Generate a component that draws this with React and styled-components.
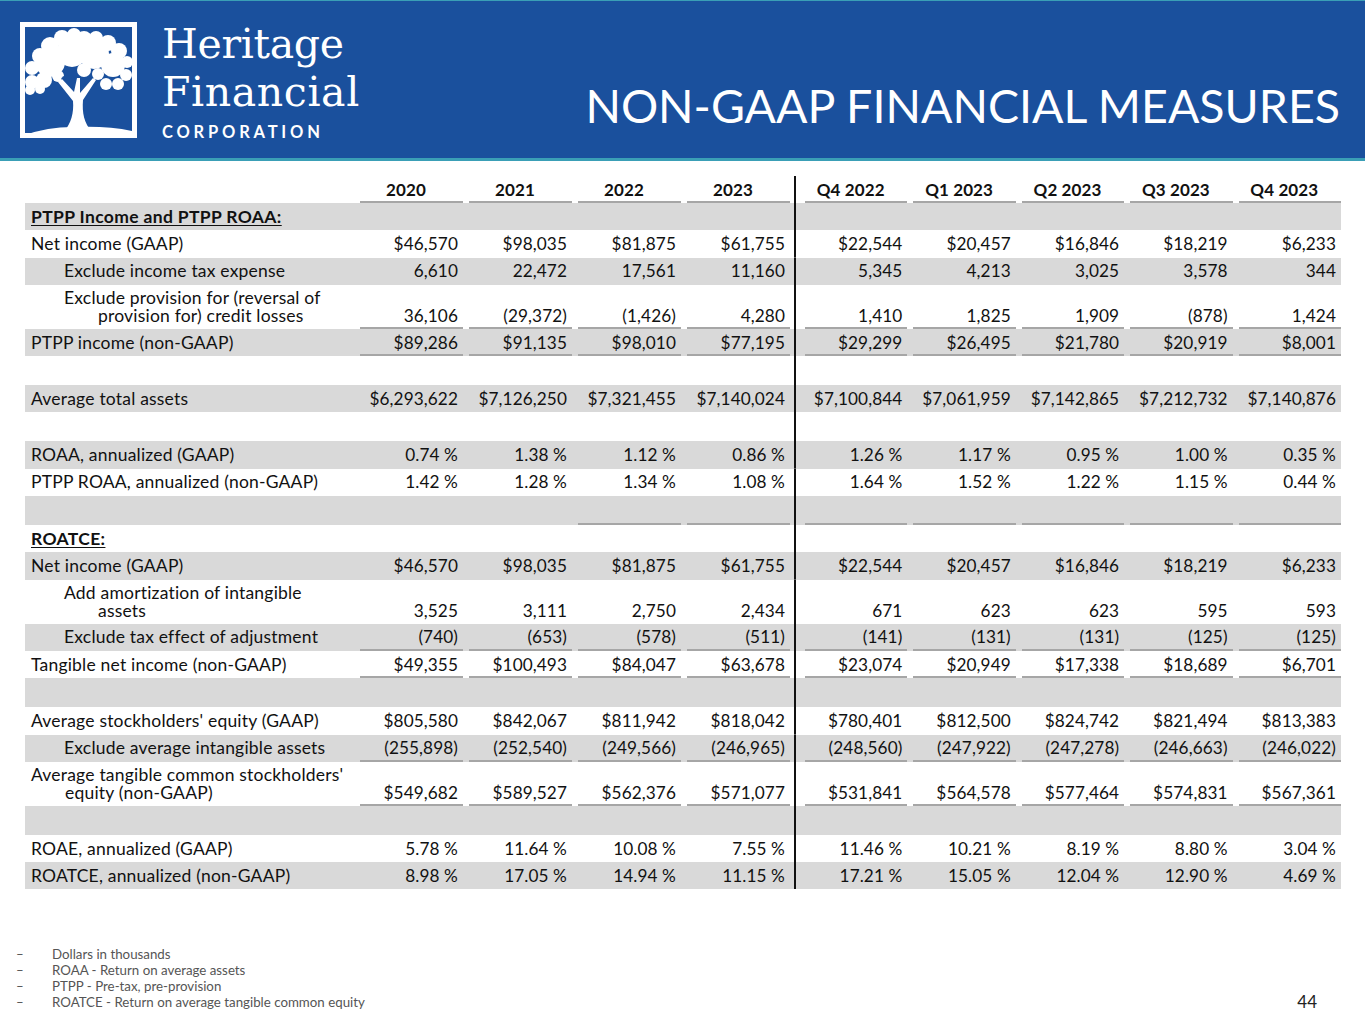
import React from "react";
import styled, { createGlobalStyle } from "styled-components";

const GlobalStyle = createGlobalStyle`
  html, body {
    margin: 0;
    padding: 0;
    background: #fff;
  }
  body {
    font-family: Lato, "Liberation Sans", sans-serif;
    color: #111;
  }
`;

const BLUE = "#1a509d";

const Page = styled.div`
  width: 1365px;
  height: 1024px;
  overflow: hidden;
  display: flex;
  flex-direction: column;
  background: #fff;
`;

const Header = styled.header`
  height: 157px;
  background: ${BLUE};
  border-top: 1px solid #3a9fb6;
  border-bottom: 3px solid #3a9fb6;
  display: flex;
  justify-content: space-between;
  align-items: flex-start;
`;

const Logo = styled.div`
  display: flex;
  padding: 21px 0 0 20px;
`;

const LogoText = styled.div`
  margin-left: 25px;
  margin-top: -2px;
  color: #fff;
`;

const Wordmark = styled.div`
  font-family: "DejaVu Serif", "Liberation Serif", serif;
  font-size: 41px;
  line-height: 48px;
  letter-spacing: ${(p) => p.$spacing}px;
`;

const Corp = styled.div`
  margin-top: 8px;
  font-family: Lato, sans-serif;
  font-weight: 700;
  font-size: 16.5px;
  line-height: 16px;
  letter-spacing: 3.8px;
`;

const Title = styled.h1`
  align-self: flex-end;
  margin: 0 25px 29px 0;
  font-family: Lato, sans-serif;
  font-weight: 400;
  font-size: 46.5px;
  line-height: 47px;
  color: #fff;
  white-space: nowrap;
`;

const Table = styled.div`
  margin: 15px 0 0 25px;
  width: 1316px;
`;

const Row = styled.div`
  display: grid;
  grid-template-columns: 329px repeat(4, 109px) 9px repeat(5, 1fr);
  height: ${(p) => p.$h}px;
  background: ${(p) => (p.$shade ? "#d9d9d9" : "transparent")};
  font-size: 17.5px;
  line-height: 18px;
`;

const Label = styled.div`
  display: flex;
  align-items: center;
  padding-left: ${(p) => p.$indent + 34}px;
  text-indent: -34px;
  white-space: nowrap;
  letter-spacing: ${(p) => (p.$heading ? 0.35 : 0.2)}px;
  font-weight: ${(p) => (p.$heading ? 700 : 400)};
  text-decoration: ${(p) => (p.$heading ? "underline" : "none")};
  text-underline-offset: 2px;
`;

const Cell = styled.div`
  display: flex;
  justify-content: ${(p) => (p.$head ? "center" : "flex-end")};
  align-items: ${(p) => (p.$tall ? "flex-end" : "center")};
  padding: 0 5px ${(p) => (p.$tall ? 4 : 0)}px 0;
  font-weight: ${(p) => (p.$head ? 700 : 400)};
  font-size: ${(p) => (p.$head ? 17 : 17.2)}px;
  letter-spacing: 0.1px;
  white-space: nowrap;
  background: ${(p) =>
    p.$under ? "linear-gradient(#a6a6a6, #a6a6a6) right bottom / calc(100% - 6px) 2px no-repeat" : "none"};
`;

const Divider = styled.div`
  background: linear-gradient(#111, #111) center / 2px 100% no-repeat;
`;

const Footer = styled.footer`
  margin-top: 57px;
  display: flex;
  justify-content: space-between;
  align-items: flex-end;
  padding: 0 48px 0 16px;
`;

const Notes = styled.ul`
  list-style: none;
  margin: 0;
  padding: 0;
  font-size: 13.3px;
  line-height: 16px;
  color: #555;
`;

const Note = styled.li`
  display: flex;
`;

const Dash = styled.span`
  width: 36px;
`;

const PageNum = styled.div`
  font-size: 17px;
  line-height: 16px;
  color: #222;
`;

const years = ["2020", "2021", "2022", "2023"];
const quarters = ["Q4 2022", "Q1 2023", "Q2 2023", "Q3 2023", "Q4 2023"];

const netIncome = ["$46,570", "$98,035", "$81,875", "$61,755", "$22,544", "$20,457", "$16,846", "$18,219", "$6,233"];

const rows = [
  { label: "PTPP Income and PTPP ROAA:", heading: true },
  { label: "Net income (GAAP)", values: netIncome },
  { label: "Exclude income tax expense", indent: 1, values: ["6,610", "22,472", "17,561", "11,160", "5,345", "4,213", "3,025", "3,578", "344"] },
  {
    label: ["Exclude provision for (reversal of", "provision for) credit losses"],
    indent: 1,
    values: ["36,106", "(29,372)", "(1,426)", "4,280", "1,410", "1,825", "1,909", "(878)", "1,424"],
    under: "all",
  },
  { label: "PTPP income (non-GAAP)", values: ["$89,286", "$91,135", "$98,010", "$77,195", "$29,299", "$26,495", "$21,780", "$20,919", "$8,001"], under: "all" },
  { empty: true },
  { label: "Average total assets", values: ["$6,293,622", "$7,126,250", "$7,321,455", "$7,140,024", "$7,100,844", "$7,061,959", "$7,142,865", "$7,212,732", "$7,140,876"] },
  { empty: true },
  { label: "ROAA, annualized (GAAP)", values: ["0.74 %", "1.38 %", "1.12 %", "0.86 %", "1.26 %", "1.17 %", "0.95 %", "1.00 %", "0.35 %"] },
  { label: "PTPP ROAA, annualized (non-GAAP)", values: ["1.42 %", "1.28 %", "1.34 %", "1.08 %", "1.64 %", "1.52 %", "1.22 %", "1.15 %", "0.44 %"] },
  { empty: true, under: [2, 3, 4, 5, 6, 7, 8] },
  { label: "ROATCE:", heading: true },
  { label: "Net income (GAAP)", values: netIncome },
  {
    label: ["Add amortization of intangible", "assets"],
    indent: 1,
    values: ["3,525", "3,111", "2,750", "2,434", "671", "623", "623", "595", "593"],
  },
  { label: "Exclude tax effect of adjustment", indent: 1, values: ["(740)", "(653)", "(578)", "(511)", "(141)", "(131)", "(131)", "(125)", "(125)"], under: "all" },
  { label: "Tangible net income (non-GAAP)", values: ["$49,355", "$100,493", "$84,047", "$63,678", "$23,074", "$20,949", "$17,338", "$18,689", "$6,701"], under: "all" },
  { empty: true },
  { label: "Average stockholders' equity (GAAP)", values: ["$805,580", "$842,067", "$811,942", "$818,042", "$780,401", "$812,500", "$824,742", "$821,494", "$813,383"] },
  {
    label: "Exclude average intangible assets",
    indent: 1,
    values: ["(255,898)", "(252,540)", "(249,566)", "(246,965)", "(248,560)", "(247,922)", "(247,278)", "(246,663)", "(246,022)"],
    under: "all",
  },
  {
    label: ["Average tangible common stockholders'", "equity (non-GAAP)"],
    values: ["$549,682", "$589,527", "$562,376", "$571,077", "$531,841", "$564,578", "$577,464", "$574,831", "$567,361"],
    under: "all",
  },
  { empty: true },
  { label: "ROAE, annualized (GAAP)", values: ["5.78 %", "11.64 %", "10.08 %", "7.55 %", "11.46 %", "10.21 %", "8.19 %", "8.80 %", "3.04 %"] },
  { label: "ROATCE, annualized (non-GAAP)", values: ["8.98 %", "17.05 %", "14.94 %", "11.15 %", "17.21 %", "15.05 %", "12.04 %", "12.90 %", "4.69 %"] },
];

const notes = [
  "Dollars in thousands",
  "ROAA - Return on average assets",
  "PTPP - Pre-tax, pre-provision",
  "ROATCE - Return on average tangible common equity",
];

function TreeMark() {
  return (
    <svg width="117" height="116" viewBox="0 0 117 116">
      <rect x="2.5" y="2.5" width="112" height="111" fill="none" stroke="#fff" strokeWidth="5" />
      <g fill="#fff">
        <circle cx="12" cy="46" r="7" />
        <circle cx="20" cy="34" r="8" />
        <circle cx="30" cy="24" r="9" />
        <circle cx="42" cy="16" r="8" />
        <circle cx="54" cy="13" r="7" />
        <circle cx="64" cy="17" r="8" />
        <circle cx="76" cy="16" r="7" />
        <circle cx="88" cy="21" r="8" />
        <circle cx="99" cy="29" r="8" />
        <circle cx="107" cy="40" r="6" />
        <circle cx="106" cy="53" r="6" />
        <circle cx="98" cy="62" r="6" />
        <circle cx="86" cy="62" r="6" />
        <circle cx="30" cy="40" r="15" />
        <circle cx="52" cy="30" r="15" />
        <circle cx="74" cy="32" r="15" />
        <circle cx="93" cy="43" r="12" />
        <circle cx="12" cy="60" r="7" />
        <circle cx="24" cy="58" r="8" />
        <circle cx="10" cy="68" r="5" />
        <circle cx="20" cy="67" r="5" />
        <circle cx="38" cy="54" r="6" />
        <circle cx="64" cy="48" r="7" />
        <circle cx="78" cy="52" r="6" />
      </g>
      <g fill={BLUE}>
        <ellipse cx="48" cy="58" rx="7" ry="5" />
        <ellipse cx="70" cy="60" rx="6" ry="4" />
      </g>
      <path
        fill="#fff"
        d="M44 110 C51 101 54 91 53 79 L38 60 L42 57 L54 70 L57 56 L60 56 L60 71 L73 56 L76 58 L63 78 C62 91 64 101 72 110 Z"
      />
      <path fill="#fff" d="M5 113 Q30 104 58 105 Q88 104 112 109 L112 113 Z" />
    </svg>
  );
}

function TableRow({ row, index }) {
  const shade = index % 2 === 0;
  const tall = Array.isArray(row.label);
  const h = row.empty ? 29 : tall ? 44 : 27.3;
  const underAt = (i) => row.under === "all" || (Array.isArray(row.under) && row.under.includes(i));
  const cells = [];
  for (let i = 0; i < 9; i++) {
    if (i === 4) cells.push(<Divider key="div" />);
    cells.push(
      <Cell key={i} $tall={tall} $under={underAt(i)}>
        {row.values ? row.values[i] : ""}
      </Cell>
    );
  }
  return (
    <Row $h={h} $shade={shade}>
      <Label $indent={row.indent ? 39 : 6} $heading={row.heading}>
        <span>
          {tall ? (
            <>
              {row.label[0]}
              <br />
              {row.label[1]}
            </>
          ) : (
            row.label
          )}
        </span>
      </Label>
      {cells}
    </Row>
  );
}

export default function App() {
  const heads = [...years, ...quarters];
  return (
    <Page>
      <GlobalStyle />
      <Header>
        <Logo>
          <TreeMark />
          <LogoText>
            <Wordmark $spacing={-0.3}>Heritage</Wordmark>
            <Wordmark $spacing={0.6}>Financial</Wordmark>
            <Corp>CORPORATION</Corp>
          </LogoText>
        </Logo>
        <Title>NON-GAAP FINANCIAL MEASURES</Title>
      </Header>

      <Table>
        <Row $h={27}>
          <Label $indent={6} />
          {heads.map((h, i) => (
            <React.Fragment key={h}>
              {i === 4 && <Divider />}
              <Cell $head $under>
                {h}
              </Cell>
            </React.Fragment>
          ))}
        </Row>
        {rows.map((row, i) => (
          <TableRow key={i} row={row} index={i} />
        ))}
      </Table>

      <Footer>
        <Notes>
          {notes.map((n) => (
            <Note key={n}>
              <Dash>–</Dash>
              {n}
            </Note>
          ))}
        </Notes>
        <PageNum>44</PageNum>
      </Footer>
    </Page>
  );
}
